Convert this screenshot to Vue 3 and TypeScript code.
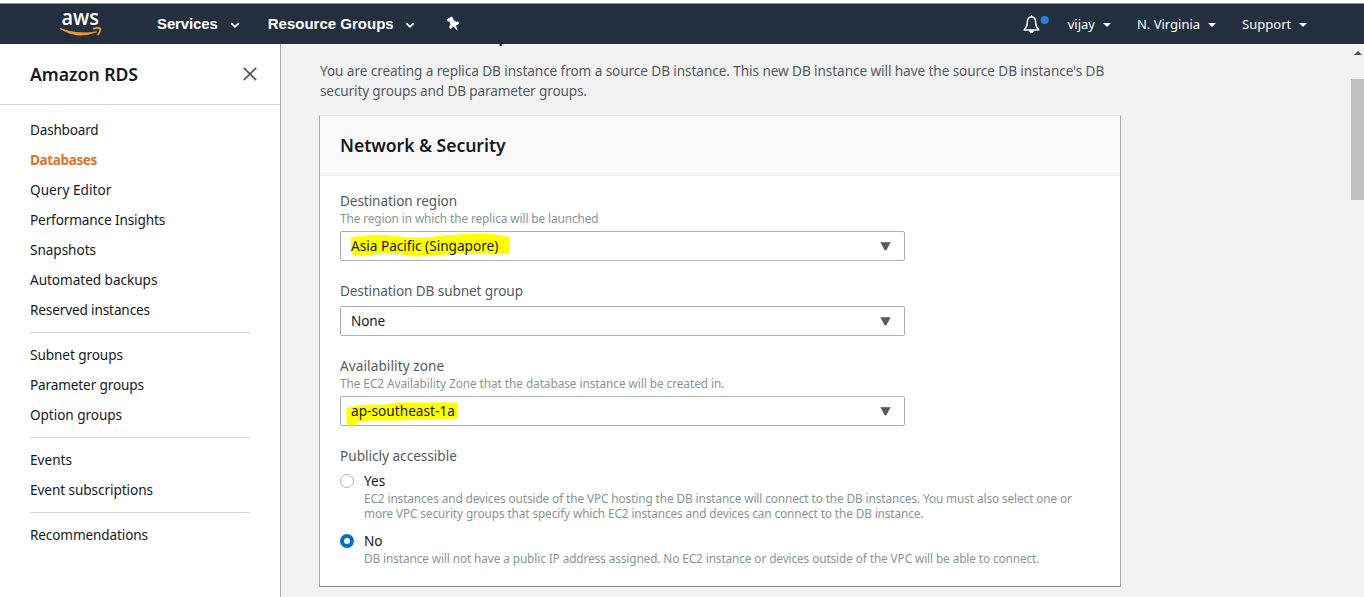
<script setup lang="ts">
interface Line { text: string; ls: number }
interface NavItem extends Line { active?: boolean }
interface Field { label: Line; hint?: Line; value: Line; mark?: string }
interface Choice { label: string; on: boolean; lines: Line[] }

// Per-line tracking in px
const track = (l: Line) => ({ letterSpacing: `${l.ls}px` })

const groups: NavItem[][] = [
  [
    { text: 'Dashboard', ls: -0.21 },
    { text: 'Databases', ls: -0.41, active: true },
    { text: 'Query Editor', ls: 0.04 },
    { text: 'Performance Insights', ls: -0.13 },
    { text: 'Snapshots', ls: -0.05 },
    { text: 'Automated backups', ls: -0.04 },
    { text: 'Reserved instances', ls: -0.14 },
  ],
  [
    { text: 'Subnet groups', ls: -0.08 },
    { text: 'Parameter groups', ls: -0.14 },
    { text: 'Option groups', ls: -0.06 },
  ],
  [{ text: 'Events', ls: 0 }, { text: 'Event subscriptions', ls: -0.07 }],
  [{ text: 'Recommendations', ls: -0.13 }],
]

const intro: Line[] = [
  { text: "You are creating a replica DB instance from a source DB instance. This new DB instance will have the source DB instance's DB", ls: -0.082 },
  { text: 'security groups and DB parameter groups.', ls: -0.14 },
]

const fields: Field[] = [
  {
    label: { text: 'Destination region', ls: -0.09 },
    hint: { text: 'The region in which the replica will be launched', ls: -0.083 },
    value: { text: 'Asia Pacific (Singapore)', ls: 0.01 },
    mark: 'M11 7 L24 5 L37 4 L50 5 L70 7 L88 7 L102 5 L118 4 L134 3 L150 3 L160 5 L169 6 L169 22 L155 23 L140 22 L116 22 L95 24 L75 25 L55 22 L42 22 L25 24 L12 23Z',
  },
  {
    label: { text: 'Destination DB subnet group', ls: -0.11 },
    value: { text: 'None', ls: -0.15 },
  },
  {
    label: { text: 'Availability zone', ls: 0.09 },
    hint: { text: 'The EC2 Availability Zone that the database instance will be created in.', ls: -0.05 },
    value: { text: 'ap-southeast-1a', ls: 0.04 },
    mark: 'M7 12 L18 10 L30 9 L45 9 L55 7 L90 7 L117 7 L117 22 L90 23 L60 24 L30 24 L18 26 L15 29 L8 29 L7 26Z',
  },
]

const choices: Choice[] = [
  {
    label: 'Yes',
    on: false,
    lines: [
      { text: 'EC2 instances and devices outside of the VPC hosting the DB instance will connect to the DB instances. You must also select one or', ls: -0.095 },
      { text: 'more VPC security groups that specify which EC2 instances and devices can connect to the DB instance.', ls: -0.105 },
    ],
  },
  {
    label: 'No',
    on: true,
    lines: [
      { text: 'DB instance will not have a public IP address assigned. No EC2 instance or devices outside of the VPC will be able to connect.', ls: -0.095 },
    ],
  },
]
</script>

<template>
  <div class="page">
    <header class="bar">
      <svg class="logo" width="44" height="32" viewBox="0 0 44 32">
        <text x="2.5" y="17" textLength="37.5" lengthAdjust="spacingAndGlyphs" class="logo-text">aws</text>
        <path d="M1.2 20.6 Q18.5 31.8 37.6 23.8 Q19 27.4 1.2 20.6Z" fill="#f29b2c" stroke="#f29b2c" stroke-width="0.9" stroke-linejoin="round" />
        <path d="M34.2 20.9 Q39 19 41.3 20.5 Q41.6 24 38.6 27.2" fill="none" stroke="#f29b2c" stroke-width="1.7" />
      </svg>
      <span class="main services">Services</span>
      <svg class="chev first" width="10" height="7" viewBox="0 0 10 7"><path d="M1.2 1.2L5 4.8L8.8 1.2" /></svg>
      <span class="main">Resource Groups</span>
      <svg class="chev second" width="10" height="7" viewBox="0 0 10 7"><path d="M1.2 1.2L5 4.8L8.8 1.2" /></svg>
      <svg class="pin" width="14" height="16" viewBox="0 0 14 16"><path d="M0.6 3.4L5.6 0.5L7.4 2.4L7.2 3.6L10 5.8L12.2 5.6L13.2 7.8L10 9.6L11.6 14.8L7.4 10.8L4.2 13.2L3 10.6L4.4 9L3.6 5.6L2 5.4Z" fill="#fff" /></svg>
      <span class="space"></span>
      <svg class="bell" width="28" height="20" viewBox="0 0 28 20">
        <path d="M1.2 16Q4.3 13 4.3 8.5Q4.3 3.2 8.5 2.8Q12.7 3.2 12.7 8.5Q12.7 13 15.8 16Z" fill="none" stroke="#eee" stroke-width="1.5" stroke-linejoin="round" />
        <path d="M8.5 1.2V3M6.4 16.6a2.1 1.9 0 0 0 4.2 0z" fill="#fff" stroke="#fff" />
        <circle cx="21.6" cy="6" r="4.1" fill="#2e7fdb" />
      </svg>
      <span class="util">vijay</span><i class="tri"></i>
      <span class="util">N. Virginia</span><i class="tri"></i>
      <span class="util">Support</span><i class="tri"></i>
    </header>
    <div class="body">
      <aside class="side">
        <div class="side-head">
          <span class="brand">Amazon RDS</span>
          <svg width="14" height="14" viewBox="0 0 14 14"><path d="M0.8 0.8L13.2 13.2M13.2 0.8L0.8 13.2" stroke="#545b64" stroke-width="1.8" /></svg>
        </div>
        <nav>
          <ul v-for="(g, i) in groups" :key="i">
            <li v-for="n in g" :key="n.text"><a :class="{ active: n.active }" :style="track(n)">{{ n.text }}</a></li>
          </ul>
        </nav>
      </aside>
      <main class="content">
        <h1>Create read replica DB instance</h1>
        <div class="intro">
          <div v-for="l in intro" :key="l.text" :style="track(l)">{{ l.text }}</div>
        </div>
        <section class="card">
          <h2>Network &amp; Security</h2>
          <div class="form">
            <div v-for="f in fields" :key="f.label.text" class="field">
              <div class="label" :style="track(f.label)">{{ f.label.text }}</div>
              <div v-if="f.hint" class="hint" :style="track(f.hint)">{{ f.hint.text }}</div>
              <div class="select">
                <svg v-if="f.mark" class="mark" width="180" height="30" viewBox="0 0 180 30"><path :d="f.mark" fill="#ff0" stroke="#ff0" stroke-linejoin="round" /></svg>
                <span class="value" :style="track(f.value)">{{ f.value.text }}</span>
                <svg width="11" height="9" viewBox="0 0 11 9"><path d="M0.8 0.5H10.2L6.2 8H4.8Z" fill="#545b64" stroke="#545b64" stroke-width="0.6" stroke-linejoin="round" /></svg>
              </div>
            </div>
            <div class="label">Publicly accessible</div>
            <div v-for="c in choices" :key="c.label" class="radio">
              <span class="dot" :class="{ on: c.on }"></span>
              <div>
                <div>{{ c.label }}</div>
                <div v-for="l in c.lines" :key="l.text" class="hint" :style="track(l)">{{ l.text }}</div>
              </div>
            </div>
          </div>
        </section>
      </main>
      <div class="scroll"><i class="up"></i><i class="thumb"></i></div>
    </div>
  </div>
</template>

<style>
body { margin: 0; overflow: hidden; }
</style>

<style scoped>
.page { width: 1364px; height: 597px; display: flex; flex-direction: column; overflow: hidden; background: #f2f2f2; font: 13.6px/20px 'Noto Sans', 'Open Sans', sans-serif; color: #16191f; white-space: nowrap; box-sizing: border-box; border-top: 3px solid #fff; }
.bar { height: 41px; flex: none; box-sizing: border-box; background: #232f3e; border-top: 1px solid #8b9199; display: flex; align-items: center; color: #fff; position: relative; z-index: 1; }
.logo { margin-left: 59px; margin-right: 54px; overflow: visible; }
.logo-text { font: 600 22px 'Open Sans', sans-serif; fill: #fff; }
.main { font: bold 15px/20px 'Liberation Sans', Arial, sans-serif; }
.services { letter-spacing: -0.12px; }
.chev { fill: none; stroke: #fff; stroke-width: 1.8; }
.chev.first { margin: 3px 28px 0 12px; }
.chev.second { margin: 3px 31px 0 11.5px; }
.space { flex: 1; }
.bell { margin: -1px 16.5px 0 0; }
.util { font-size: 13px; }
.tri { width: 0; height: 0; border: 4px solid transparent; border-top-color: #fff; border-bottom: 0; margin: 2px 26px 0 8px; }
.tri:last-child { margin-right: 56.8px; }
.body { flex: 1; display: flex; min-height: 0; }
.side { width: 280px; background: #fff; border-right: 1px solid #aaafb2; flex: none; }
.side-head { height: 60px; border-bottom: 1px solid #d5dbdb; display: flex; align-items: center; justify-content: space-between; padding: 0 23px 0 30px; }
.brand { font-size: 17.6px; font-weight: 600; }
nav { padding: 10px 30px; }
ul { list-style: none; margin: 0; padding: 0 0 7px; }
ul + ul { border-top: 1px solid #d5dbdb; padding-top: 7px; }
li { height: 30px; line-height: 30px; }
.active { color: #e07328; font-weight: 700; }
.content { width: 802px; padding-left: 38px; flex: none; overflow: hidden; }
h1 { font-size: 26.5px; line-height: 36px; height: 36px; margin: -33px 0 14px 1px; font-weight: 400; }
.intro { margin: 0 0 14px 1px; color: #545b64; }
.card { background: #fff; border: 1px solid #aaafb2; border-top-color: #e4e8e8; border-bottom-color: #7d898a; height: 470px; width: 800px; }
h2 { margin: 0; height: 59px; background: #fafafa; border-bottom: 1px solid #eaeded; font-size: 17.6px; font-weight: 600; line-height: 59px; padding-left: 20px; letter-spacing: -0.05px; }
.form { padding: 15px 20px; }
.field { margin-bottom: 20px; }
.label { color: #545b64; }
.hint { color: #879596; font-size: 11.8px; line-height: 15px; }
.select { position: relative; box-sizing: border-box; width: 565px; height: 30px; margin-top: 5px; border: 1px solid #aab0b4; border-radius: 2px; display: flex; justify-content: space-between; align-items: center; padding: 0 12.6px 0 10px; }
.mark { position: absolute; left: -1px; top: -1px; }
.value { position: relative; }
.radio { display: flex; margin-top: 5px; }
.radio + .radio { margin-top: 10px; }
.dot { box-sizing: border-box; width: 14px; height: 14px; border: 1px solid #aab7b8; border-radius: 50%; margin: 3px 10px 0 0; }
.dot.on { border: 4px solid #0073bb; }
.scroll { width: 13px; margin-left: auto; display: flex; flex-direction: column; align-items: center; }
.up { border: 4px solid transparent; border-bottom-color: #505050; border-top: 0; margin: 7px 0 24px; }
.thumb { width: 13px; height: 121px; background: #c1c1c1; }
</style>
